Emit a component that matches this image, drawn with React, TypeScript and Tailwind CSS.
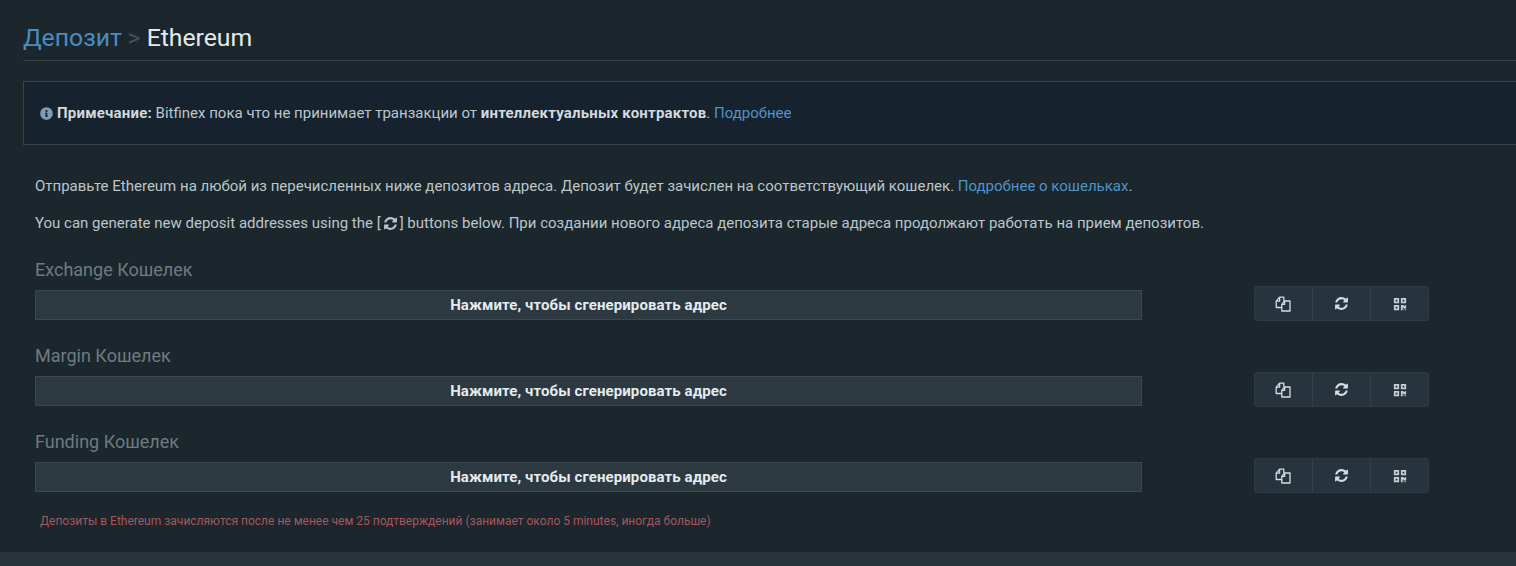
import React from 'react';
import { FaInfoCircle, FaQrcode } from 'react-icons/fa';

const CopyIcon: React.FC = () => (
  <svg className="-ml-[1px]" width="16" height="16" viewBox="0 0 16 16" fill="none" stroke="#d5dde2" strokeWidth="1.3" strokeLinejoin="round">
    <path d="M7 11.5H1.2V5.2L4.6 1.2H8.8V5" />
    <path d="M4.6 1.2V5.2H1.2" />
    <path d="M6.8 15V8.4L9.6 5H15V15Z" />
    <path d="M9.6 5V8.4H6.8" />
  </svg>
);

const RefreshIcon: React.FC<{ className?: string }> = ({ className }) => (
  <svg className={className} viewBox="0 0 1792 1792" fill="currentColor">
    <path d="M1639 1056q0 5-1 7-64 268-268 434.5t-478 166.5q-146 0-282.5-55t-243.5-157l-129 129q-19 19-45 19t-45-19-19-45v-448q0-26 19-45t45-19h448q26 0 45 19t19 45-19 45l-137 137q71 66 161 102t187 36q134 0 250-65t186-179q11-17 53-117 8-23 30-23h192q13 0 22.5 9.5t9.5 22.5zm25-800v448q0 26-19 45t-45 19h-448q-26 0-45-19t-19-45 19-45l138-138q-148-137-349-137-134 0-250 65t-186 179q-11 17-53 117-8 23-30 23h-199q-13 0-22.5-9.5t-9.5-22.5v-7q65-268 270-434.5t480-166.5q146 0 284 55.5t245 156.5l130-129q19-19 45-19t45 19 19 45z" />
  </svg>
);

const Wallet: React.FC<{ name: string }> = ({ name }) => (
  <div className="mb-[23px]">
    <div className="text-[18px] leading-6 text-[#6f7a80] mb-[8px]">{name}</div>
    <div className="flex items-start">
      <div className="w-[1107px] h-[30px] shrink-0 flex items-center justify-center bg-[#2d3940] border border-[#3a474e] text-[15px] tracking-[0.1px] font-bold text-[#e4ebef] cursor-pointer">
        Нажмите, чтобы сгенерировать адрес
      </div>
      <div className="ml-[112px] -mt-[4px] w-[175px] h-[35px] flex bg-[#27343d] border border-[#2e3b44] rounded-[3px]">
        <button className="flex-1 flex items-center justify-center border-r border-[#344049]">
          <CopyIcon />
        </button>
        <button className="flex-1 flex items-center justify-center border-r border-[#344049]">
          <RefreshIcon className="w-[15px] h-[15px] text-[#d5dde2]" />
        </button>
        <button className="flex-1 flex items-center justify-center">
          <FaQrcode className="text-[14px] text-[#c5ced4]" />
        </button>
      </div>
    </div>
  </div>
);

const App: React.FC = () => {
  return (
    <div className="w-[1516px] h-[566px] overflow-hidden bg-[#27343b] font-['Roboto',sans-serif]">
      <div className="h-[552px] bg-[#1b272d] pl-[23px]">
        <div className="h-[61px] pt-[21px] border-b border-[#333f45] text-[24.75px] leading-[34px]">
          <a className="text-[#4b8cc0]">Депозит</a>
          <span className="text-[#465258] -ml-[0.5px]"> &gt; </span>
          <span className="text-[#e6eaec]">Ethereum</span>
        </div>

        <div className="mt-[20px] h-[64px] flex items-center pl-[16px] bg-[#16232f] border border-r-0 border-[#354450] text-[15px] text-[#bcc5ca]">
          <FaInfoCircle className="text-[13px] text-[#7e9db5] mr-[4px]" />
          <span>
            <b className="text-[#d3d9dd] tracking-[0.2px]">Примечание:</b> Bitfinex пока что не принимает транзакции от{' '}
            <b className="text-[#d3d9dd] tracking-[0.2px]">интеллектуальных контрактов</b>. <a className="text-[#4f93c9]">Подробнее</a>
          </span>
        </div>

        <div className="pl-[12px] pt-[31px] text-[15px] text-[#bcc5ca]">
          <p className="leading-5">
            Отправьте Ethereum на любой из перечисленных ниже депозитов адреса. Депозит будет зачислен на соответствующий кошелек.{' '}
            <a className="text-[#4f93c9]">Подробнее о кошельках</a>.
          </p>
          <p className="leading-5 mt-[17px] mb-[25px] flex items-center whitespace-pre">
            You can generate new deposit addresses using the [<RefreshIcon className="w-[15px] h-[15px] mx-[2px]" />] buttons below. При создании нового адреса депозита старые адреса продолжают работать на прием депозитов.
          </p>

          <Wallet name="Exchange Кошелек" />
          <Wallet name="Margin Кошелек" />
          <Wallet name="Funding Кошелек" />

          <div className="pl-[5px] -mt-[3px] text-[12px] leading-4 text-[#a5565f]">
            Депозиты в Ethereum зачисляются после не менее чем 25 подтверждений (занимает около 5 minutes, иногда больше)
          </div>
        </div>
      </div>
    </div>
  );
};

export default App;
